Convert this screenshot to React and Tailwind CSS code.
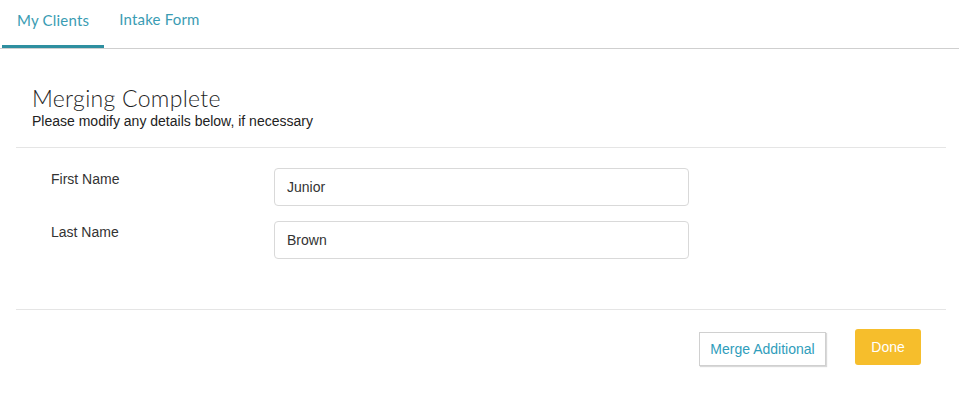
import React from 'react';

const fields = [
  { label: 'First Name', value: 'Junior' },
  { label: 'Last Name', value: 'Brown' },
];

const App = () => {
  return (
    <div className="min-h-[399px] w-full bg-white font-['Liberation_Sans',Arial,sans-serif] text-[#333]">
      {/* Tabs */}
      <div className="flex border-b border-[#cfcfcf] pl-[2px] font-['Lato',sans-serif] text-[15px] tracking-[0.2px] text-[#3a9cb3]">
        <div className="flex h-[48px] items-center border-b-[3px] border-[#2e8fa0] px-[15px] pb-[6px] pt-[2px]">
          My Clients
        </div>
        <div className="flex h-[48px] items-center px-[15px] pb-[9px]">Intake Form</div>
      </div>

      <div className="pl-[16px] pr-[13px]">
        {/* Header */}
        <div className="pl-[16px] pt-[36px] pb-[17px]">
          <h1 className="font-['Lato',sans-serif] text-[23px] font-light leading-[26px] tracking-[0.3px] text-[#1f1f1f]">
            Merging Complete
          </h1>
          <p className="mt-[1px] text-[14px] leading-[18px] text-[#222]">
            Please modify any details below, if necessary
          </p>
        </div>

        {/* Form */}
        <div className="border-t border-[#e5e5e5] pt-[20px] pb-[50px]">
          <div className="flex flex-col gap-[15px]">
            {fields.map((f) => (
              <div key={f.label} className="flex items-start">
                <label className="w-[258px] pl-[35px] pt-[1px] text-[14px] text-[#333]">
                  {f.label}
                </label>
                <input
                  defaultValue={f.value}
                  className="h-[38px] w-[415px] rounded-[4px] border border-[#d9d9d9] px-[12px] text-[14px] text-[#333] outline-none"
                />
              </div>
            ))}
          </div>
        </div>

        {/* Footer */}
        <div className="flex items-start justify-end gap-[29px] border-t border-[#e5e5e5] pt-[19px] pr-[25px]">
          <button className="mt-[3px] h-[34px] w-[127px] border border-[#d0d0d0] bg-white text-[14px] text-[#2f9dbb] shadow-[1px_1px_1px_rgba(0,0,0,0.15)]">
            Merge Additional
          </button>
          <button className="h-[36px] w-[66px] rounded-[3px] bg-[#f6be2c] text-[14px] text-white">
            Done
          </button>
        </div>
      </div>
    </div>
  );
};

export default App;
